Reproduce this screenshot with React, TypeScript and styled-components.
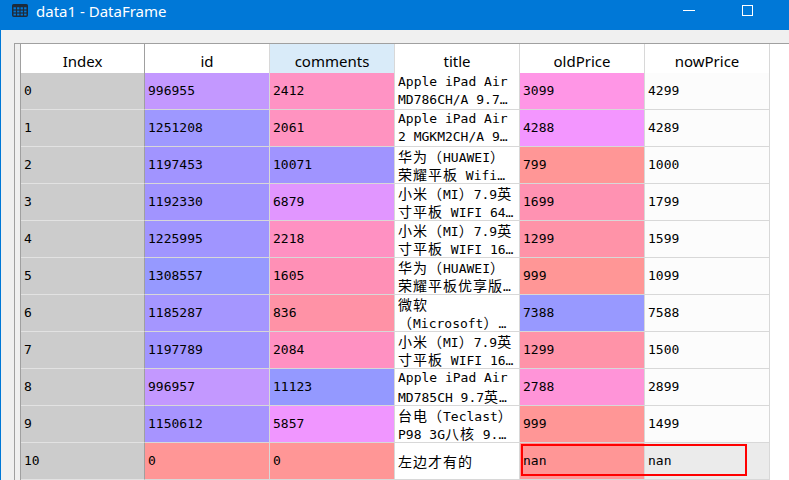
import React from "react";
import styled, { createGlobalStyle } from "styled-components";

const GlobalStyle = createGlobalStyle`
  html, body { margin: 0; padding: 0; background: #F0F0F0; overflow: hidden; }
  * { box-sizing: border-box; }
`;

const Window = styled.div`
  position: relative;
  width: 789px;
  height: 480px;
  overflow: hidden;
  display: flex;
  flex-direction: column;
  background: #F0F0F0;
  border-left: 1px solid #0078D7;
`;

const TitleBar = styled.div`
  height: 30px;
  flex: none;
  display: flex;
  align-items: flex-start;
  background: #0078D7;
  padding: 0 13px 0 11px;
`;

const TitleIcon = styled.svg`
  margin-top: 4px;
  width: 16px;
  height: 13px;
  flex: none;
`;

const TitleText = styled.div`
  margin-left: 8px;
  line-height: 22px;
  font-family: "Noto Sans", "Open Sans", sans-serif;
  font-size: 15px;
  color: #FFFFFF;
  white-space: nowrap;
`;

const Spacer = styled.div`
  flex: 1;
`;

const Controls = styled.div`
  display: flex;
`;

const Control = styled.div`
  width: 58px;
  height: 21px;
  display: flex;
  align-items: center;
  justify-content: center;
`;

const MinGlyph = styled.div`
  width: 12px;
  height: 1px;
  background: #FFFFFF;
`;

const MaxGlyph = styled.div`
  width: 11px;
  height: 11px;
  border: 1px solid #FFFFFF;
`;

const Body = styled.div`
  flex: 1;
  display: flex;
  padding: 13px 0 0 13px;
  min-height: 0;
`;

const Frame = styled.div`
  flex: 1;
  display: flex;
  border-top: 1px solid #A0A0A0;
  border-left: 1px solid #A0A0A0;
  overflow: hidden;
`;

const RowHeaderStub = styled.div`
  width: 5px;
  flex: none;
  background: #F0F0F0;
`;

const Table = styled.div`
  flex: 1;
  background: #FFFFFF;
  border-left: 1px solid #A0A0A0;
  display: flex;
  flex-direction: column;
`;

const GridRow = styled.div<{ $h: number }>`
  display: grid;
  grid-template-columns: 124px repeat(5, 125px);
  height: ${(p) => p.$h}px;
  flex: none;
`;

const HeaderCell = styled.div<{ $active?: boolean; $frozen?: boolean }>`
  display: flex;
  align-items: center;
  justify-content: center;
  padding-top: 4px;
  background: ${(p) => (p.$active ? "#D9EBF9" : "#FFFFFF")};
  border-right: 1px solid ${(p) => (p.$frozen ? "#A0A0A0" : "#D8D8D8")};
  font-family: "Noto Sans", "Open Sans", sans-serif;
  font-size: 15px;
  color: #000000;
  white-space: nowrap;
`;

const Cell = styled.div<{ $bg: string; $frozen?: boolean }>`
  display: flex;
  flex-direction: column;
  justify-content: center;
  padding-left: 3px;
  background: ${(p) => p.$bg};
  border-right: 1px solid ${(p) => (p.$frozen ? "#A0A0A0" : "#D8D8D8")};
  border-bottom: 1px solid ${(p) => (p.$frozen ? "#E2E2E2" : "#D8D8D8")};
  font-family: "DejaVu Sans Mono", "Liberation Mono", "Noto Sans CJK SC", monospace;
  font-size: 13px;
  line-height: 18px;
  color: #000000;
  overflow: hidden;
`;

const Line = styled.div`
  height: 18px;
  line-height: 18px;
  white-space: nowrap;
  overflow: hidden;
`;

const Wide = styled.span`
  font-family: "Noto Sans CJK SC", sans-serif;
  font-size: 14px;
  letter-spacing: 1px;
  line-height: 18px;
`;

const Highlight = styled.div`
  position: absolute;
  left: 520px;
  top: 444px;
  width: 226px;
  height: 32px;
  border: 2px solid #FF0000;
  pointer-events: none;
`;

type Row = {
  i: number;
  id: string;
  idBg: string;
  c: string;
  cBg: string;
  t: string[];
  o: string;
  oBg: string;
  n: string;
  nBg?: string;
};

const rows: Row[] = [
  { i: 0, id: "996955", idBg: "#C398FF", c: "2412", cBg: "#FF93C4", t: ["Apple iPad Air", "MD786CH/A 9.7…"], o: "3099", oBg: "#FF96E6", n: "4299" },
  { i: 1, id: "1251208", idBg: "#9E98FF", c: "2061", cBg: "#FF93C0", t: ["Apple iPad Air", "2 MGKM2CH/A 9…"], o: "4288", oBg: "#F396FF", n: "4289" },
  { i: 2, id: "1197453", idBg: "#A194FF", c: "10071", cBg: "#A094FF", t: ["华为（HUAWEI）", "荣耀平板 Wifi…"], o: "799", oBg: "#FF9696", n: "1000" },
  { i: 3, id: "1192330", idBg: "#A194FF", c: "6879", cBg: "#E196FF", t: ["小米（MI）7.9英", "寸平板 WIFI 64…"], o: "1699", oBg: "#FF92B2", n: "1799" },
  { i: 4, id: "1225995", idBg: "#A095FF", c: "2218", cBg: "#FF91C2", t: ["小米（MI）7.9英", "寸平板 WIFI 16…"], o: "1299", oBg: "#FF93A8", n: "1599" },
  { i: 5, id: "1308557", idBg: "#9699FF", c: "1605", cBg: "#FF90B6", t: ["华为（HUAWEI）", "荣耀平板优享版…"], o: "999", oBg: "#FF9696", n: "1099" },
  { i: 6, id: "1185287", idBg: "#A596FF", c: "836", cBg: "#FF92A6", t: ["微软", "（Microsoft）…"], o: "7388", oBg: "#9899FF", n: "7588" },
  { i: 7, id: "1197789", idBg: "#A195FF", c: "2084", cBg: "#FF91C2", t: ["小米（MI）7.9英", "寸平板 WIFI 16…"], o: "1299", oBg: "#FF93A8", n: "1500" },
  { i: 8, id: "996957", idBg: "#C398FF", c: "11123", cBg: "#9499FF", t: ["Apple iPad Air", "MD785CH 9.7英…"], o: "2788", oBg: "#FF94D8", n: "2899" },
  { i: 9, id: "1150612", idBg: "#A794FF", c: "5857", cBg: "#F096FF", t: ["台电（Teclast）", "P98 3G八核 9.…"], o: "999", oBg: "#FF9696", n: "1499" },
  { i: 10, id: "0", idBg: "#FF9696", c: "0", cBg: "#FF9696", t: ["左边才有的"], o: "nan", oBg: "#FF9696", n: "nan", nBg: "#EBEBEB" },
];

const CJK = /([\u3000-\u303f\u4e00-\u9fff\uff00-\uffef]+)/;

function MixedText({ text }: { text: string }) {
  const parts = text.split(CJK).filter(Boolean);
  return (
    <>
      {parts.map((p, k) => (CJK.test(p) ? <Wide key={k}>{p}</Wide> : <span key={k}>{p}</span>))}
    </>
  );
}

function TableIcon() {
  return (
    <TitleIcon viewBox="0 0 16 13">
      <rect x="0.75" y="0.75" width="14.5" height="11.5" rx="1" fill="none" stroke="#1E2B3A" strokeWidth="1.5" />
      <rect x="0.75" y="0.75" width="14.5" height="2.5" fill="#1E2B3A" />
      <line x1="4.5" y1="1" x2="4.5" y2="12" stroke="#1E2B3A" strokeWidth="1.2" />
      <line x1="8" y1="1" x2="8" y2="12" stroke="#1E2B3A" strokeWidth="1.2" />
      <line x1="11.5" y1="1" x2="11.5" y2="12" stroke="#1E2B3A" strokeWidth="1.2" />
      <line x1="1" y1="6" x2="15" y2="6" stroke="#1E2B3A" strokeWidth="1.2" />
      <line x1="1" y1="9" x2="15" y2="9" stroke="#1E2B3A" strokeWidth="1.2" />
    </TitleIcon>
  );
}

const headers = ["id", "comments", "title", "oldPrice", "nowPrice"];

export default function App() {
  return (
    <>
      <GlobalStyle />
      <Window>
        <TitleBar>
          <TableIcon />
          <TitleText>data1 - DataFrame</TitleText>
          <Spacer />
          <Controls>
            <Control>
              <MinGlyph />
            </Control>
            <Control>
              <MaxGlyph />
            </Control>
          </Controls>
        </TitleBar>
        <Body>
          <Frame>
            <RowHeaderStub />
            <Table>
              <GridRow $h={29}>
                <HeaderCell $frozen>Index</HeaderCell>
                {headers.map((h) => (
                  <HeaderCell key={h} $active={h === "comments"}>
                    {h}
                  </HeaderCell>
                ))}
              </GridRow>
              {rows.map((r) => (
                <GridRow key={r.i} $h={37}>
                  <Cell $bg="#CCCCCC" $frozen>
                    {r.i}
                  </Cell>
                  <Cell $bg={r.idBg}>{r.id}</Cell>
                  <Cell $bg={r.cBg}>{r.c}</Cell>
                  <Cell $bg="#FFFFFF">
                    {r.t.map((l, k) => (
                      <Line key={k}>
                        <MixedText text={l} />
                      </Line>
                    ))}
                  </Cell>
                  <Cell $bg={r.oBg}>{r.o}</Cell>
                  <Cell $bg={r.nBg ?? "#FCFCFC"}>{r.n}</Cell>
                </GridRow>
              ))}
            </Table>
          </Frame>
        </Body>
        <Highlight />
      </Window>
    </>
  );
}
